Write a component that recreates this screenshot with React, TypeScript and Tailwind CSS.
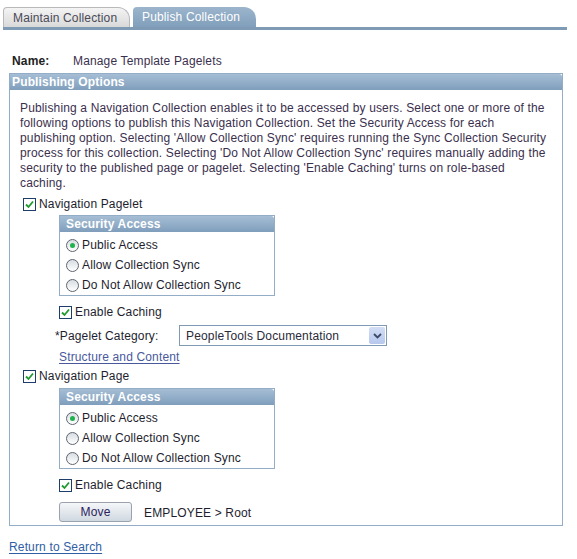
import React from "react";

function Check() {
  return (
    <span className="inline-flex h-[13px] w-[13px] shrink-0 items-center justify-center border border-[#1d3d6b] bg-white">
      <svg width="9" height="9" viewBox="0 0 9 9">
        <path d="M1 4.5 L3.5 7 L8 1.5" fill="none" stroke="#1f9a2e" strokeWidth="1.8" />
      </svg>
    </span>
  );
}

function Radio({ on }: { on?: boolean }) {
  return (
    <span className="inline-flex h-[13px] w-[13px] shrink-0 items-center justify-center rounded-full border border-[#5e6670] bg-gradient-to-b from-[#d8dde2] to-white">
      {on && <span className="h-[5px] w-[5px] rounded-full bg-[#22b14c]" />}
    </span>
  );
}

function SecurityBox() {
  const opts = ["Public Access", "Allow Collection Sync", "Do Not Allow Collection Sync"];
  return (
    <div className="ml-[39px] w-[216px] border border-[#94adc6] bg-white">
      <div className="flex h-[16px] items-center rounded-tr-[3px] bg-gradient-to-b from-[#a6bed5] to-[#7f9ebc] pl-[6px] font-bold text-white">
        Security Access
      </div>
      <div className="pt-[3px]">
        {opts.map((o, i) => (
          <div key={o} className="flex h-[20px] items-center gap-[3px] pl-[6px] text-[#1e1e2e]">
            <Radio on={i === 0} />
            <span>{o}</span>
          </div>
        ))}
      </div>
    </div>
  );
}

const intro = [
  "Publishing a Navigation Collection enables it to be accessed by users. Select one or more of the",
  "following options to publish this Navigation Collection. Set the Security Access for each",
  "publishing option. Selecting 'Allow Collection Sync' requires running the Sync Collection Security",
  "process for this collection. Selecting 'Do Not Allow Collection Sync' requires manually adding the",
  "security to the published page or pagelet. Selecting 'Enable Caching' turns on role-based",
  "caching.",
];

export default function App() {
  return (
    <div className="h-[559px] w-[577px] overflow-hidden bg-white font-['Liberation_Sans',Arial,sans-serif] text-[12px] leading-none tracking-[0.15px]">
      {/* tabs */}
      <div className="pl-[3px] pr-[10px] pt-[7px]">
        <div className="flex h-[20px] items-end gap-[3px]">
          <div className="flex h-[20px] w-[127px] items-center rounded-tl-[4px] rounded-tr-[12px] border border-b-0 border-[#b9b9b9] bg-gradient-to-b from-[#f4f4f4] to-[#d9d9d9] pl-[9px] text-[#4a4a58]">
            Maintain Collection
          </div>
          <div className="flex h-[20px] w-[123px] items-center rounded-tl-[4px] rounded-tr-[12px] bg-gradient-to-b from-[#9cb5cd] to-[#819fbb] pl-[9px] text-white">
            Publish Collection
          </div>
        </div>
        <div className="h-[3px] bg-[#7f9ab5]" />
      </div>

      {/* name */}
      <div className="ml-[12px] mt-[23px] flex h-[16px] items-center">
        <span className="w-[61px] font-bold text-[#222]">Name:</span>
        <span className="text-[#3b2f4e]">Manage Template Pagelets</span>
      </div>

      {/* publishing options */}
      <div className="ml-[9px] mt-[4px] w-[554px] border border-[#94adc6]">
        <div className="flex h-[16px] items-center rounded-tr-[3px] bg-gradient-to-b from-[#a6bed5] to-[#7f9ebc] pl-[2px] font-bold text-white">
          Publishing Options
        </div>
        <div className="px-[10px] pb-[3px] pt-[11px]">
          <div className="leading-[15px] text-[#3b2f4e]">
            {intro.map((l) => (
              <div key={l} className="whitespace-nowrap">
                {l}
              </div>
            ))}
          </div>

          <div className="ml-[3px] mt-[3px] flex h-[20px] items-center gap-[3px] text-[#1e1e2e]">
            <Check />
            <span>Navigation Pagelet</span>
          </div>
          <div className="mt-[1px]">
            <SecurityBox />
          </div>
          <div className="ml-[39px] mt-[6px] flex h-[20px] items-center gap-[3px] text-[#1e1e2e]">
            <Check />
            <span>Enable Caching</span>
          </div>
          <div className="ml-[35px] mt-[3px] flex h-[21px] items-center">
            <span className="w-[124px] text-[#1e1e2e]">*Pagelet Category:</span>
            <div className="flex h-[21px] w-[208px] items-center justify-between border border-[#7f9ab5] bg-white pl-[6px] pr-[1px] text-[#2a2a3a]">
              <span>PeopleTools Documentation</span>
              <span className="flex h-[17px] w-[16px] items-center justify-center rounded-[2px] bg-gradient-to-b from-[#d3ddf5] to-[#b7c8ee]">
                <svg width="9" height="6" viewBox="0 0 9 6">
                  <path d="M1 1 L4.5 4.5 L8 1" fill="none" stroke="#3c4a66" strokeWidth="1.8" />
                </svg>
              </span>
            </div>
          </div>
          <div className="ml-[39px] mt-[3px] flex h-[16px] items-center">
            <a href="#" className="text-[#48599c] underline underline-offset-2">
              Structure and Content
            </a>
          </div>
          <div className="ml-[3px] mt-[1px] flex h-[20px] items-center gap-[3px] text-[#1e1e2e]">
            <Check />
            <span>Navigation Page</span>
          </div>
          <div className="mt-[2px]">
            <SecurityBox />
          </div>
          <div className="ml-[39px] mt-[6px] flex h-[20px] items-center gap-[3px] text-[#1e1e2e]">
            <Check />
            <span>Enable Caching</span>
          </div>
          <div className="ml-[39px] mt-[7px] flex items-center gap-[12px]">
            <button className="flex h-[20px] w-[73px] items-center justify-center rounded-[3px] border border-[#9aa3ad] bg-gradient-to-b from-[#f5f7f9] to-[#d0d8e0] text-[#2b1d5c]">
              Move
            </button>
            <span className="pt-[2px] text-[#1e1e2e]">EMPLOYEE &gt; Root</span>
          </div>
        </div>
      </div>

      <div className="ml-[9px] mt-[13px] flex h-[16px] items-center">
        <a href="#" className="text-[#2f5ea4] underline underline-offset-2">
          Return to Search
        </a>
      </div>
    </div>
  );
}
